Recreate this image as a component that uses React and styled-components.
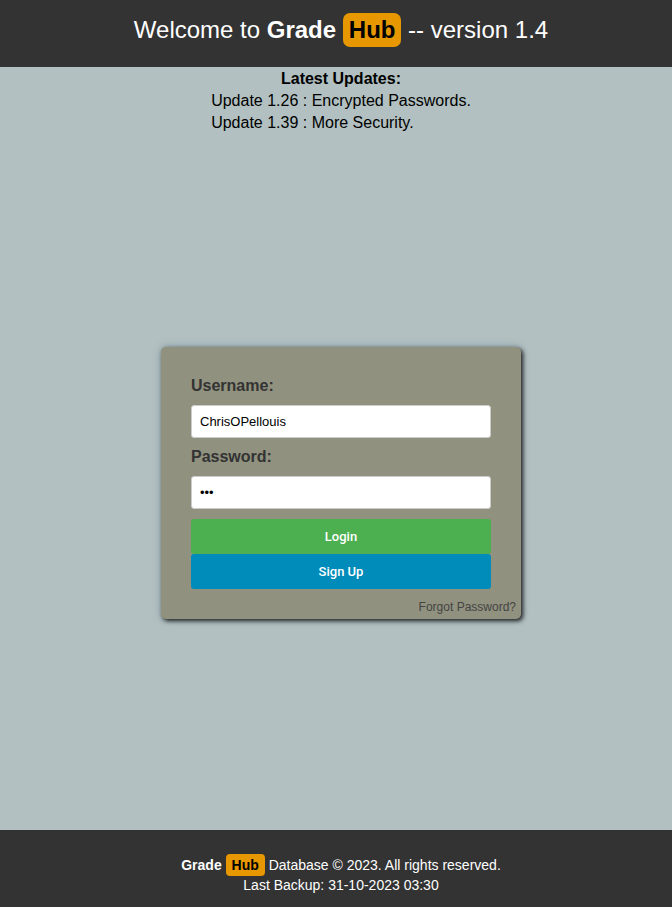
import React from "react";
import styled, { createGlobalStyle } from "styled-components";

const GlobalStyle = createGlobalStyle`
  *, *::before, *::after { box-sizing: border-box; }
  body {
    margin: 0;
    background: #b2c0c1;
    color: #000;
    font-family: "Liberation Sans", Arial, sans-serif;
    font-size: 16px;
  }
`;

const Page = styled.div`
  display: flex;
  flex-direction: column;
  min-height: 100vh;
`;

const Header = styled.header`
  padding: 12px 0 19px 10px;
  background: #333;
  color: #fff;
  text-align: center;
`;

const Title = styled.h1`
  margin: 0;
  font-size: 24px;
  font-weight: 400;
  line-height: 36px;
`;

const Badge = styled.span`
  display: inline-block;
  padding: 3px 6px;
  border-radius: ${(p) => (p.$small ? 4 : 7)}px;
  background: #e79700;
  color: #000;
  font-weight: 700;
  line-height: ${(p) => (p.$small ? 16 : 28)}px;
`;

const Main = styled.main`
  flex: 1;
  display: flex;
  flex-direction: column;
  align-items: center;
  padding-left: 10px;
`;

const Updates = styled.section`
  padding: 1px 0 2px;
  line-height: 22px;
`;

const UpdatesTitle = styled.h2`
  margin: 0;
  font-size: 16px;
  text-align: center;
`;

const UpdateList = styled.ul`
  margin: 0;
  padding: 0;
  list-style: none;
`;

const Panel = styled.form`
  display: flex;
  flex-direction: column;
  width: 100%;
  max-width: 360px;
  margin: auto 0;
  padding-top: 29px;
  border-radius: 5px;
  background: #90917e;
  box-shadow: 2px 2px 4px #222, 0 0 8px #8499a3;
`;

const Fields = styled.div`
  display: flex;
  flex-direction: column;
  padding: 0 30px;
`;

const Label = styled.label`
  margin-bottom: 9px;
  color: #333;
  font-weight: 700;
  line-height: 20px;
`;

const Input = styled.input`
  width: 100%;
  height: 33px;
  margin-bottom: ${(p) => (p.$last ? 10 : 9)}px;
  padding: 8px;
  border: 1px solid #ccc;
  border-radius: 3px;
  background: #fff;
  color: #000;
  font: 13px "Liberation Sans", Arial, sans-serif;
`;

const Button = styled.button`
  height: 35px;
  padding: 0 15px;
  border: 0;
  border-radius: 3px;
  background: ${(p) => p.$color};
  color: #fff;
  font: 500 13px Roboto, Arial, sans-serif;
  cursor: pointer;
`;

const ForgotRow = styled.div`
  padding: 10px 5px 4px;
  font-size: 12px;
  line-height: 16px;
  text-align: right;
`;

const ForgotLink = styled.a`
  color: #444;
  text-decoration: none;
`;

const Footer = styled.footer`
  padding: 24px 0 13px 10px;
  background: #333;
  color: #fff;
  font-size: 14px;
  text-align: center;
`;

const FooterLine = styled.p`
  margin: 0;
  line-height: 18px;
`;

export default function App() {
  return (
    <>
      <GlobalStyle />
      <Page>
        <Header>
          <Title>
            Welcome to <strong>Grade</strong> <Badge>Hub</Badge> -- version 1.4
          </Title>
        </Header>
        <Main>
          <Updates>
            <UpdatesTitle>Latest Updates:</UpdatesTitle>
            <UpdateList>
              <li>Update 1.26 : Encrypted Passwords.</li>
              <li>Update 1.39 : More Security.</li>
            </UpdateList>
          </Updates>
          <Panel onSubmit={(e) => e.preventDefault()}>
            <Fields>
              <Label htmlFor="username">Username:</Label>
              <Input id="username" type="text" defaultValue="ChrisOPellouis" />
              <Label htmlFor="password">Password:</Label>
              <Input id="password" type="password" defaultValue="abc" $last />
              <Button type="submit" $color="#4caf50">Login</Button>
              <Button type="button" $color="#008cba">Sign Up</Button>
            </Fields>
            <ForgotRow>
              <ForgotLink href="#forgot">Forgot Password?</ForgotLink>
            </ForgotRow>
          </Panel>
        </Main>
        <Footer>
          <FooterLine>
            <strong>Grade</strong> <Badge $small>Hub</Badge> Database © 2023. All rights reserved.
          </FooterLine>
          <FooterLine>Last Backup: 31-10-2023 03:30</FooterLine>
        </Footer>
      </Page>
    </>
  );
}
